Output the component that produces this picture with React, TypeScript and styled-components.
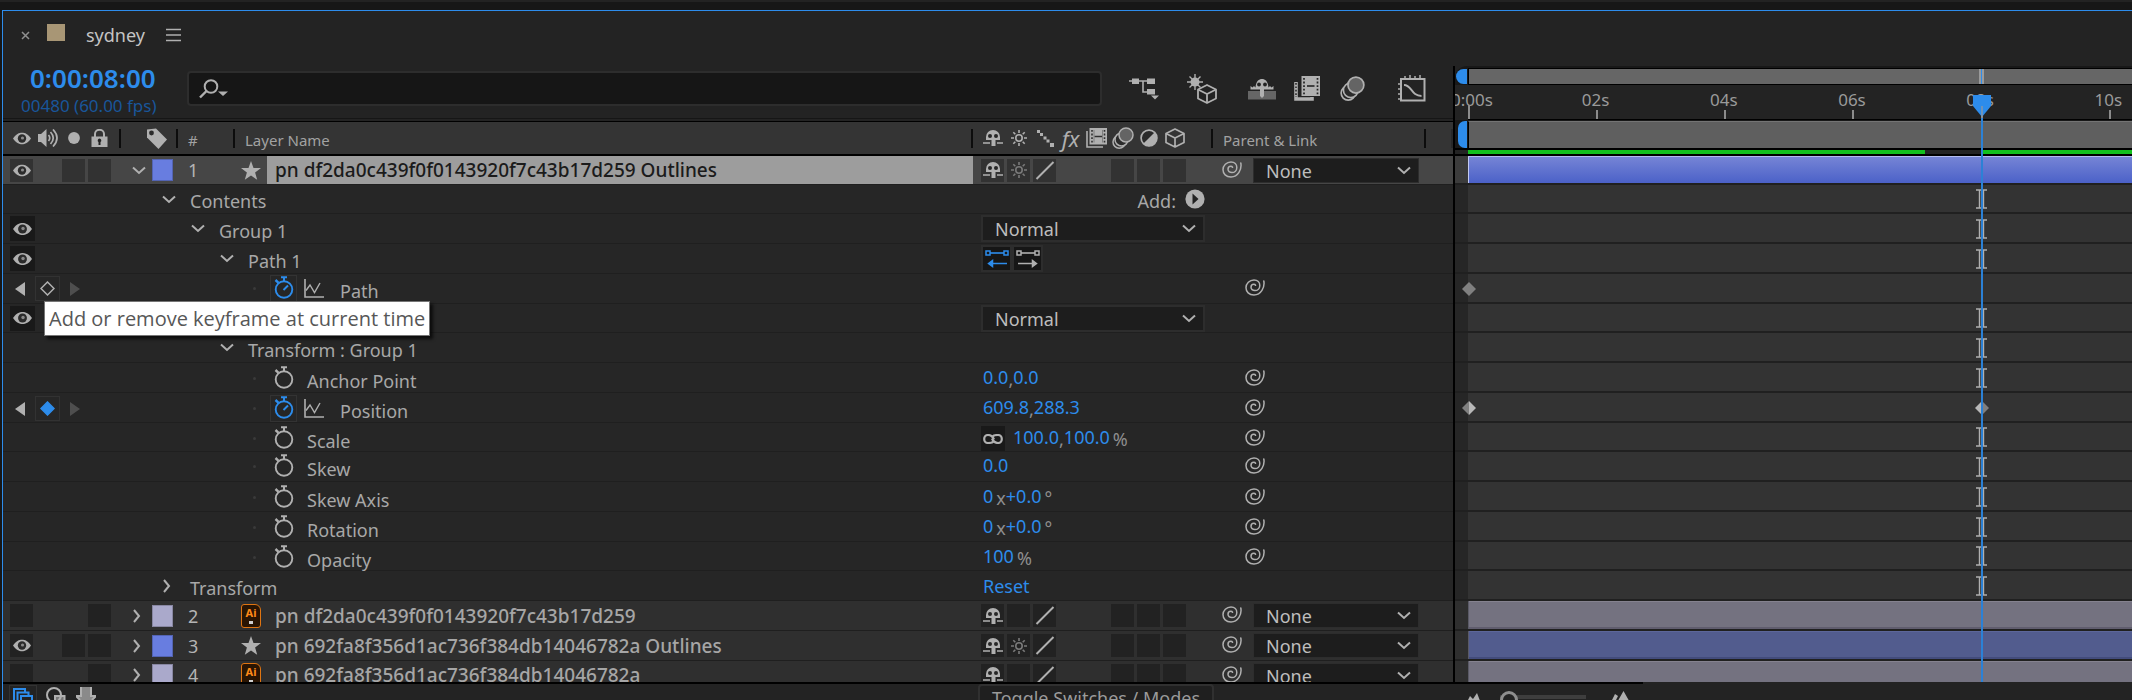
import React from "react";
import styled, { createGlobalStyle, css } from "styled-components";

const c = {
  bg: "#232323",
  row: "#262626",
  layer: "#2f2f2f",
  selected: "#464646",
  line: "#1f1f1f",
  icon: "#b0b0b0",
  text: "#a8a8a8",
  blue: "#2d8ceb",
};

const GlobalStyle = createGlobalStyle`
  * { box-sizing: border-box; }
  body { margin: 0; background: ${c.bg}; }
  button, input, select { font: inherit; color: inherit; margin: 0; }
  svg { display: block; flex: none; }
`;

/* ---------- frame ---------- */

const Shell = styled.div`
  height: 100vh;
  display: flex;
  flex-direction: column;
  overflow: hidden;
  background: #171717;
  color: ${c.text};
  font: 18px/24px "Noto Sans", "Open Sans", sans-serif;
`;

const NeighbourEdge = styled.div`
  flex: none;
  height: 10px;
  border-top: 2px solid #232323;
  background: #171717;
`;

const Panel = styled.section`
  flex: 1;
  min-height: 0;
  margin-left: 2px;
  display: flex;
  flex-direction: column;
  border: solid ${c.blue};
  border-width: 1px 0 0 1px;
  background: ${c.bg};
`;

const PlainButton = styled.button`
  display: flex;
  align-items: center;
  justify-content: center;
  padding: 0;
  border: 0;
  background: none;
  cursor: pointer;
`;

const Tabs = styled.header`
  flex: none;
  height: 55px;
  padding: 11px 18px 18px;
  display: flex;
  align-items: center;
`;

const TabSwatch = styled.span`
  width: 18px;
  height: 17px;
  margin: 0 21px 5px 17px;
  background: #a89675;
`;

const TabTitle = styled.h1`
  margin: 0 21px 0 0;
  color: #c4c4c4;
  font-size: 18px;
  font-weight: 400;
  line-height: 26px;
`;

const panes = css`
  display: grid;
  grid-template-columns: minmax(1100px, 1452px) minmax(300px, 1fr);
`;

const Workspace = styled.div`
  ${panes}
  flex: 1;
  min-height: 0;
  overflow: hidden;
`;

const LayerPane = styled.div`
  border-right: 2px solid #000;
`;

/* ---------- controls above the layer list ---------- */

const Controls = styled.div`
  height: 52px;
  display: flex;
  padding: 0 26px 0 18px;
`;

const TimeBlock = styled.div`
  width: 166px;
  flex: none;
  white-space: nowrap;
`;

const TimeCode = styled(PlainButton)`
  margin-left: 9px;
  color: ${c.blue};
  font-size: 26px;
  font-weight: 600;
  line-height: 24px;
`;

const FrameInfo = styled.div`
  margin-top: 5px;
  color: #19569a;
  font-size: 17px;
  line-height: 22px;
`;

const SearchBox = styled.label`
  flex: 1;
  height: 35px;
  margin: 5px 27px 0 0;
  padding-left: 10px;
  display: flex;
  align-items: center;
  gap: 8px;
  border: 2px solid #2d2d2d;
  border-radius: 4px;
  background: #161616;
`;

const SearchInput = styled.input`
  flex: 1;
  min-width: 0;
  border: 0;
  outline: 0;
  background: none;
`;

const ToolGroups = styled.div`
  display: flex;
  align-items: center;
  gap: 30px;
  height: 45px;
`;

const ToolGroup = styled.div<{ $gap?: number }>`
  display: flex;
  gap: ${(p) => p.$gap ?? 0}px;
`;

const ToolButton = styled(PlainButton)`
  width: 30px;
  height: 30px;
`;

/* ---------- layer list ---------- */

const columns = css`
  display: grid;
  grid-template-columns: 118px 57px 57px minmax(0, 1fr) 240px 213px 27px;
`;

const ColumnHeads = styled.div`
  ${columns}
  height: 38px;
  align-items: center;
  border-top: 1px solid #161616;
  border-bottom: 2px solid #000;
  background: linear-gradient(#232323 0 2px, #000 2px 3px, #343434 3px);
  color: #a2a2a2;
  font-size: 15px;
`;

const Head = styled.div<{ $pad?: number }>`
  height: 19px;
  margin-top: 3px;
  padding-left: ${(p) => p.$pad ?? 0}px;
  display: flex;
  align-items: center;
  border-right: 2px solid #0c0c0c;
  &:last-child { border-right-color: #292929; }
`;

const HeadText = styled.span`
  padding-top: 3px;
`;

const Slots = styled.div<{ $pad?: number }>`
  display: flex;
  align-items: center;
  gap: 3px;
  padding-left: ${(p) => p.$pad ?? 0}px;
`;

const Slot = styled.span`
  width: 23px;
  height: 23px;
  display: flex;
  align-items: center;
  justify-content: center;
`;

const rowHeight = css`
  height: 30px;
  &:nth-child(4n + 2) { height: 29px; }
  &:first-child { height: 28px; border-top: 0; }
`;

const Row = styled.div<{ $kind: "selected" | "layer" | "prop" }>`
  ${columns}
  ${rowHeight}
  align-items: center;
  border-top: 1px solid ${c.line};
  background: ${(p) => (p.$kind === "selected" ? c.selected : p.$kind === "layer" ? c.layer : c.row)};
`;

const SlotButton = styled(PlainButton)<{ $tone?: "selected" | "layer" | "tree" | "none" }>`
  width: ${(p) => (p.$tone === "tree" ? 25 : 23)}px;
  height: ${(p) => (p.$tone === "tree" ? 25 : 23)}px;
  background: ${(p) => ({ selected: "#323232", layer: "#222222", tree: "#191919", none: "none" })[p.$tone ?? "none"]};
`;

const LabelCell = styled.div`
  display: flex;
  align-items: center;
  gap: 7px;
  padding-left: 12px;
`;

const Twirl = styled(PlainButton)<{ $closed?: boolean }>`
  width: 12px;
  height: 20px;
  justify-content: ${(p) => (p.$closed ? "flex-start" : "center")};
`;

const Swatch = styled.span<{ $color: string }>`
  width: 21px;
  height: 22px;
  border: 1px solid #0003;
  background: ${(p) => p.$color};
`;

const NumberCell = styled.div`
  padding-left: 10px;
  color: #b4b4b4;
`;

const LayerName = styled.div`
  display: flex;
  align-items: center;
  gap: 6px;
  height: 100%;
  padding-left: 6px;
`;

const NameField = styled.span<{ $selected?: boolean }>`
  flex: 1;
  height: 100%;
  display: flex;
  align-items: center;
  padding-left: 8px;
  overflow: hidden;
  white-space: nowrap;
  font-size: 19px;
  font-weight: 500;
  color: ${(p) => (p.$selected ? "#1b1b1b" : "#a6a6a6")};
  background: ${(p) => (p.$selected ? "#9d9d9d" : "none")};
`;

const TreeCell = styled.div<{ $depth: number }>`
  grid-column: 2 / 5;
  display: flex;
  align-items: center;
  padding-left: ${(p) => 42 + p.$depth * 29}px;
`;

const GroupName = styled.span`
  padding: 4px 0 0 15px;
`;

const PropCell = styled.div`
  grid-column: 2 / 5;
  display: flex;
  align-items: center;
  padding-left: 132px;
`;

const PropName = styled.span`
  padding: 4px 0 0 10px;
`;

const Dot = styled.i`
  width: 3px;
  height: 3px;
  margin-right: 14px;
  border-radius: 2px;
  background: #3a3a3a;
`;

const WatchButton = styled(PlainButton)<{ $on?: boolean }>`
  width: 27px;
  height: 27px;
  padding-bottom: 2px;
  border: 1px solid ${(p) => (p.$on ? "#333333" : "transparent")};
`;

const GraphButton = styled(PlainButton)`
  margin: 0 6px 0 7px;
`;

const KeyNav = styled.div`
  display: flex;
  align-items: center;
  gap: 10px;
  padding-left: 12px;
`;

const KeyToggle = styled(PlainButton)`
  position: relative;
  width: 25px;
  height: 25px;
  border: 1px solid #323232;
`;

const Tooltip = styled.span`
  position: absolute;
  z-index: 5;
  left: 8px;
  top: 24px;
  height: 35px;
  padding: 0 4px;
  border: 1px solid #767676;
  background: #fff;
  box-shadow: 3px 3px 3px #000a;
  color: #575757;
  font: 20px/33px "Open Sans", "Noto Sans", sans-serif;
  white-space: nowrap;
`;

const ValueCell = styled.div<{ $end?: boolean }>`
  display: flex;
  align-items: center;
  justify-content: ${(p) => (p.$end ? "flex-end" : "flex-start")};
  padding: 0 8px;
`;

const AddLabel = styled.span`
  padding: 4px 9px 0 0;
`;

const Values = styled.div<{ $raised?: boolean }>`
  display: flex;
  align-items: center;
  padding: 0 0 ${(p) => (p.$raised ? 3 : 0)}px 2px;
`;

const Value = styled(PlainButton)`
  color: ${c.blue};
`;

const Unit = styled.span<{ $gap?: boolean }>`
  padding: 4px 0 0 ${(p) => (p.$gap ? 3 : 0)}px;
  color: #8e8e8e;
`;

const ChainButton = styled(PlainButton)`
  width: 24px;
  height: 25px;
  margin-right: 6px;
  background: #191919;
`;

const PathButton = styled(PlainButton)`
  width: 31px;
  height: 27px;
  border: 2px solid #2d2d2d;
  background: #161616;
`;

const ParentCell = styled.div<{ $prop?: boolean }>`
  display: flex;
  align-items: center;
  gap: 11px;
  padding-left: ${(p) => (p.$prop ? 32 : 9)}px;
`;

const WhipButton = styled(PlainButton)`
  padding-bottom: 2px;
`;

const SelectBox = styled.span<{ $parent?: boolean }>`
  position: relative;
  width: ${(p) => (p.$parent ? 166 : 224)}px;
  height: ${(p) => (p.$parent ? 25 : 27)}px;
  border: ${(p) => (p.$parent ? 1 : 2)}px solid #2d2d2d;
  background: #1d1d1d;
  svg {
    position: absolute;
    right: 7px;
    top: 7px;
    pointer-events: none;
  }
`;

const Select = styled.select`
  display: block;
  width: 100%;
  height: 100%;
  padding: 0 28px 0 12px;
  appearance: none;
  border: 0;
  outline: 0;
  background: none;
  color: #bdbdbd;
`;

/* ---------- timeline ---------- */

const Timeline = styled.div`
  position: relative;
  overflow: hidden;
`;

const Navigator = styled.div`
  height: 19px;
  padding-top: 2px;
  display: flex;
  border-radius: 12px 0 0 0;
  background: #181818;
`;

const NavHandle = styled.span`
  width: 11px;
  height: 15px;
  margin: 1px 1px 0 1px;
  border-radius: 10px 0 0 10px;
  background: ${c.blue};
`;

const NavTrack = styled.span`
  flex: 1;
  border: solid #000;
  border-width: 1px 0 1px 1px;
  background: #666666;
`;

const Ruler = styled.div`
  height: 35px;
  margin-left: 13px;
  position: relative;
  border-bottom: 1px solid #000;
`;

const MarkText = styled.span`
  padding-right: 3px;
`;

const Mark = styled.div`
  position: absolute;
  top: 5px;
  width: 60px;
  margin-left: -29px;
  display: flex;
  flex-direction: column;
  align-items: center;
  font-size: 17px;
  line-height: 20px;
  color: #9a9a9a;
  &::after {
    content: "";
    width: 2px;
    height: 9px;
    background: #8c8c8c;
  }
  &:first-child::after {
    margin-top: -5px;
    height: 14px;
  }
  &:first-child ${MarkText} {
    padding: 0 0 0 6px;
  }
`;

const WorkArea = styled.div`
  height: 28px;
  display: flex;
  padding-top: 1px;
  background: #181818;
`;

const WorkHandle = styled.span`
  width: 9px;
  margin: 0 1px 0 3px;
  border-radius: 7px 0 0 7px;
  background: ${c.blue};
`;

const WorkTrack = styled.span`
  flex: 1;
  border-left: 1px solid #000;
  border-top: 1px solid #747474;
  background: #5f5f5f;
`;

const CacheBar = styled.div`
  height: 8px;
  padding-left: 13px;
  display: flex;
  border-top: 2px solid #000;
  border-bottom: 2px solid #000;
  background: #232323;
`;

const Cached = styled.span<{ $share: number }>`
  flex: ${(p) => p.$share} 0 0;
  background: #13c01e;
`;

const Uncached = styled.span<{ $share: number }>`
  flex: ${(p) => p.$share} 0 0;
`;

const Track = styled.div<{ $kind: "selected" | "layer" | "prop" }>`
  ${rowHeight}
  position: relative;
  display: flex;
  padding-left: 13px;
  border-top: 1px solid ${c.line};
  background: ${(p) =>
    p.$kind === "prop"
      ? `linear-gradient(90deg, ${c.row} 13px, #333333 13px)`
      : p.$kind === "selected"
        ? "#3c3c3c"
        : c.layer};
  &:not(:first-child)::before {
    content: "";
    position: absolute;
    left: 0;
    right: 0;
    top: -2px;
    height: 2px;
    background: #202020;
  }
`;

const bars = {
  selected: "linear-gradient(#7584d5, #4a60c8)",
  blue: "linear-gradient(#5c669a 0 1px, #525c8e 1px calc(100% - 3px), #434c7c calc(100% - 3px))",
  lavender: "linear-gradient(#85828f 0 1px, #747280 1px calc(100% - 3px), #605d6e calc(100% - 3px))",
};

const Bar = styled.div<{ $bar: keyof typeof bars }>`
  flex: 1;
  border-left: 1px solid ${(p) => (p.$bar === "selected" ? "#c3caf2" : "#5a5a66")};
  border-top: ${(p) => (p.$bar === "selected" ? "1px solid #b4bdf0" : "0")};
  background: ${(p) => bars[p.$bar]};
`;

const Lane = styled.div`
  position: relative;
  flex: 1;
`;

const Pin = styled.span`
  position: absolute;
  top: 0;
  bottom: 0;
  width: 16px;
  margin-left: -7px;
  display: flex;
  align-items: center;
  justify-content: center;
`;

const Overlay = styled.div`
  position: absolute;
  inset: 0 0 0 13px;
  pointer-events: none;
`;

const Playhead = styled.div`
  position: absolute;
  top: 3px;
  bottom: 0;
  width: 18px;
  margin-left: -8px;
  display: flex;
  flex-direction: column;
  align-items: center;
`;

const NavMarker = styled.span`
  width: 5px;
  height: 15px;
  margin-bottom: 11px;
  border: solid #9a9a9a;
  border-width: 0 2px;
  background: ${c.blue};
`;

const HeadLine = styled.span`
  flex: 1;
  width: 2px;
  margin-top: 1px;
  background: #2b81d6;
`;

/* ---------- footer ---------- */

const Footer = styled.footer`
  ${panes}
  flex: none;
  height: 18px;
  overflow: hidden;
  background: #232323;
`;

const FooterLeft = styled.div`
  ${columns}
  align-items: start;
  border-top: 2px solid #000;
`;

const FooterTools = styled.div`
  grid-column: 1 / 5;
  display: flex;
  gap: 8px;
  padding: 1px 0 0 6px;
`;

const FooterButton = styled(PlainButton)<{ $on?: boolean }>`
  width: ${(p) => (p.$on ? 28 : 22)}px;
  height: 26px;
  border: ${(p) => (p.$on ? "1px solid #333333" : "0")};
`;

const ToggleButton = styled(PlainButton)`
  width: 236px;
  height: 28px;
  margin: 0 0 0 3px;
  border: 2px solid #303030;
  border-radius: 4px;
  background: #1f1f1f;
  color: #9a9a9a;
`;

const FooterRight = styled.div`
  display: flex;
  align-items: flex-start;
  padding: 8px 0 0 10px;
  background: linear-gradient(90deg, #000 188px, #232323 188px) top / 100% 2px no-repeat;
`;

const ZoomSlider = styled.input`
  width: 86px;
  height: 20px;
  margin: 0 23px 0 18px;
  appearance: none;
  background: linear-gradient(#0000 5px, #3e3e3e 5px 9px, #0000 9px);
  &::-webkit-slider-thumb {
    appearance: none;
    width: 18px;
    height: 18px;
    border: 3px solid #8e8e8e;
    border-radius: 50%;
    background: #232323;
  }
`;

/* ---------- icons ---------- */

const Eye = ({ w = 18 }: { w?: number }) => (
  <svg width={w} height={w - 5} viewBox="0 0 18 13">
    <path d="M0 6.500C3 2 6 .8 9 .8s6 1.200 9 5.700C15 11 12 12.200 9 12.200S3 11 0 6.500Z" fill={c.icon} />
    <circle cx="9" cy="6.500" r="4.200" fill="#2b2b2b" />
    <circle cx="9.500" cy="6" r="1.600" fill="#8a8a8a" />
  </svg>
);

const Speaker = () => (
  <svg width="20" height="18" viewBox="0 0 20 18">
    <path d="M0 5h3L8.500 0v18L3 13H0Z" fill={c.icon} />
    <path d="M10.500 6q2.500 3 0 6M12.500 3q5.500 6 0 12M15 .5q8 8.500 0 17" stroke={c.icon} strokeWidth="1.700" fill="none" />
  </svg>
);

const Solo = () => (
  <svg width="12" height="12"><circle cx="6" cy="6" r="5.900" fill={c.icon} /></svg>
);

const Lock = () => (
  <svg width="17" height="18" viewBox="0 0 17 18">
    <path d="M4 8V5a4.500 4.200 0 0 1 9 0v3" stroke={c.icon} strokeWidth="2" fill="none" />
    <path d="M.5 7.500h16V18H.5Z" fill={c.icon} />
    <path d="M8.500 9.500a2 2 0 0 1 1 3.600V16h-2v-2.900a2 2 0 0 1 1-3.600Z" fill="#222" />
  </svg>
);

const Tag = () => (
  <svg width="22" height="21" viewBox="0 0 22 21">
    <path d="M1 1.500 10 .5 21 11.500 12.500 21 1 9.500Z" fill={c.icon} />
    <circle cx="5.500" cy="5" r="2.400" fill="#2b2b2b" />
  </svg>
);

const Shy = () => (
  <svg width="20" height="16" viewBox="0 0 20 16">
    <path d="M3 10V7a7 7 0 0 1 14 0v3H12.500v6h-4v-6Z" fill={c.icon} />
    <circle cx="7" cy="6" r="2" fill="#262626" />
    <circle cx="13" cy="6" r="2" fill="#262626" />
    <path d="M0 13h7M14 13h6" stroke={c.icon} strokeWidth="1.500" />
  </svg>
);

const Sun = ({ color = c.icon }: { color?: string }) => (
  <svg width="16" height="16" viewBox="0 0 16 16" stroke={color} strokeWidth="1.600" fill="none">
    <circle cx="8" cy="8" r="3.200" />
    <path d="M8 0v3M8 13v3M0 8h3M13 8h3M2.300 2.300l2 2M11.700 11.700l2 2M2.300 13.700l2-2M11.700 4.300l2-2" />
  </svg>
);

const Stairs = () => (
  <svg width="18" height="17" viewBox="0 0 18 17" fill={c.icon}>
    <path d="M1 0h3v3H1ZM4 3h3v3H4ZM7.500 6.500h3v3h-3ZM10.500 9.500h3v3h-3ZM14 13h4v4h-4Z" />
  </svg>
);

const Slash = () => (
  <svg width="20" height="19" viewBox="0 0 20 19"><path d="M1.500 18 18.500 1" stroke={c.icon} strokeWidth="2" /></svg>
);

const Fx = styled.i`
  color: ${c.icon};
  font: italic 22px/22px "Noto Sans", sans-serif;
`;

const Film = ({ s = 21 }: { s?: number }) => (
  <svg width={s} height={s - 1} viewBox="0 0 21 20">
    <path d="M1 3v16h16" stroke={c.icon} strokeWidth="1.600" fill="none" />
    <path d="M3.500 0H21v16.500H3.500Z" fill={c.icon} />
    <path d="M6 2v13M18.500 2v13" stroke="#303030" strokeWidth="1.600" strokeDasharray="1.800 1.800" />
    <path d="M8.500 8.500h7.500" stroke="#303030" strokeWidth="1.500" />
    <path d="M8 2v12.500M16.500 2v12.500" stroke="#6a6a6a" strokeWidth=".7" />
  </svg>
);

const Blur = ({ s = 22 }: { s?: number }) => (
  <svg width={s} height={s} viewBox="0 0 22 22" stroke={c.icon} strokeWidth="1.500">
    <circle cx="7.200" cy="15" r="6.200" fill="none" />
    <circle cx="9.500" cy="12.500" r="6.500" fill="#2b2b2b" />
    <circle cx="14" cy="8" r="7" fill="#646464" />
  </svg>
);

const Adjust = () => (
  <svg width="18" height="18" viewBox="0 0 18 18">
    <circle cx="9" cy="9" r="7.900" fill="#2b2b2b" stroke={c.icon} strokeWidth="1.700" />
    <path d="M14.800 3.200A8.200 8.200 0 0 1 3.200 14.800Z" fill={c.icon} />
  </svg>
);

const Cube = ({ s = 20 }: { s?: number }) => (
  <svg width={s} height={s} viewBox="0 0 20 20" stroke={c.icon} strokeWidth="1.700" fill="none" strokeLinejoin="round">
    <path d="M10 1 19 5.500v9L10 19 1 14.500v-9ZM1 5.500 10 10l9-4.500M10 10v9" />
  </svg>
);

const Whip = () => (
  <svg width="20" height="17" viewBox="0 0 20 17" stroke={c.icon} strokeWidth="1.500" fill="none" strokeLinecap="round">
    <path d="M18.800 2C20 8.500 16 16 9 16 4 16 1 12.800 1 8.800 1 4.500 4.500 1 9 1c3.700 0 5.800 2.400 5.800 5.400 0 3.100-2.200 5.200-4.900 5.200-2.300 0-3.900-1.400-3.900-3.300 0-1.800 1.300-3 2.800-3 .8 0 1.500.4 1.800 1" />
  </svg>
);

const Down = () => (
  <svg width="14" height="9" viewBox="0 0 14 9"><path d="m1 1.500 6 5.500 6-5.500" stroke={c.icon} strokeWidth="2" fill="none" /></svg>
);

const Right = () => (
  <svg width="8" height="14" viewBox="0 0 8 14"><path d="m1 1 5 6-5 6" stroke={c.icon} strokeWidth="2" fill="none" /></svg>
);

const Star = () => (
  <svg width="20" height="19" viewBox="0 0 20 19">
    <path d="m10 0 2.500 6.900 7.500.2-5.900 4.500 2.100 7.200-6.200-4.200-6.200 4.200 2.100-7.200L0 7.100l7.500-.2Z" fill={c.icon} />
  </svg>
);

const AiFile = styled.span`
  width: 20px;
  height: 24px;
  border: 1px solid #e07512;
  border-radius: 3px 6px 3px 3px;
  background: #2a1503;
  color: #ff8a18;
  font: 700 11px/15px "Noto Sans", sans-serif;
  text-align: center;
  &::after {
    content: "";
    display: block;
    width: 4px;
    height: 3px;
    margin: 1px auto 0;
    background: #d0d0d0;
  }
`;

const Stopwatch = ({ on }: { on?: boolean }) => (
  <svg width="20" height="23" viewBox="0 0 20 23" stroke={on ? c.blue : c.icon} fill="none">
    <circle cx="10" cy="13.500" r="8.300" strokeWidth="1.900" />
    <path d="M10 5V2M7 1.300h6" strokeWidth="2" />
    <path d="m1.500 4 3 2.800" strokeWidth="2.400" />
    {on && <path d="M9.500 14 14 9.500" strokeWidth="2" />}
  </svg>
);

const Graph = () => (
  <svg width="20" height="19" viewBox="0 0 20 19" stroke={c.icon} fill="none">
    <path d="M1 0v18h19" strokeWidth="1.600" />
    <path d="m2 11.500 4-5.500 4.500 7.500L16 4" strokeWidth="1.400" />
  </svg>
);

const Arrow = ({ left }: { left?: boolean }) => (
  <svg width="10" height="14" viewBox="0 0 10 14">
    <path d={left ? "M10 0v14L0 7Z" : "M0 0v14l10-7Z"} fill={left ? c.icon : "#4e4e4e"} />
  </svg>
);

const Key = ({ on }: { on?: boolean }) => (
  <svg width="15" height="15" viewBox="0 0 15 15">
    <path d="M7.500 1 14 7.500 7.500 14 1 7.500Z" fill={on ? c.blue : "#262626"} stroke={on ? c.blue : c.icon} strokeWidth="1.500" />
  </svg>
);

const KeyMark = ({ l, r }: { l: string; r: string }) => (
  <svg width="14" height="14" viewBox="0 0 14 14">
    <path d="M7 0v14L0 7Z" fill={l} />
    <path d="M7 0v14l7-7Z" fill={r} />
  </svg>
);

const IBeam = () => (
  <svg width="11" height="20" viewBox="0 0 11 20" stroke="#b0b0b0" fill="none">
    <path d="M0 1h11M0 19h11" strokeWidth="1.500" />
    <path d="M3.500 1v18M7.500 1v18" strokeWidth="1.400" />
  </svg>
);

const PathDir = ({ back }: { back?: boolean }) => (
  <svg width="24" height="18" viewBox="0 0 24 18" stroke={back ? c.blue : c.icon} fill={back ? c.blue : c.icon}>
    <path d="M4 3h16" strokeWidth="1.600" />
    <path d="M1 1h4v4H1ZM19 1h4v4h-4Z" fill="#161616" strokeWidth="1.500" />
    {back ? (
      <path d="M8 13.500h14M3.500 13.500 7.500 10.500v6Z" strokeWidth="1.500" />
    ) : (
      <path d="M2 13.500h14M20.500 13.500 16.500 10.500v6Z" strokeWidth="1.500" />
    )}
  </svg>
);

const Chain = () => (
  <svg width="20" height="10" viewBox="0 0 20 10" stroke={c.icon} strokeWidth="2.200" fill="none">
    <path d="M10.500 7.500C9 9 7 9 5 9 2.500 9 1.200 7 1.200 5S2.500 1 5 1c3 0 4.500 1 6 4.500" />
    <path d="M9.500 2.500C11 1 13 1 15 1c2.500 0 3.800 2 3.800 4S17.500 9 15 9c-3 0-4.500-1-6-4.500" />
  </svg>
);

const Play = () => (
  <svg width="20" height="20" viewBox="0 0 20 20">
    <circle cx="10" cy="10" r="9.600" fill={c.icon} />
    <path d="m7.500 4.500 6 5.500-6 5.500Z" fill="#222" />
  </svg>
);

const Magnifier = () => (
  <svg width="29" height="20" viewBox="0 0 29 20">
    <circle cx="12" cy="7.500" r="6.300" stroke={c.icon} strokeWidth="2" fill="none" />
    <path d="M7.500 12 1 18.500" stroke={c.icon} strokeWidth="2.400" />
    <path d="M19 12.500h10l-5 4.500Z" fill={c.icon} />
  </svg>
);

const Flowchart = () => (
  <svg width="30" height="24" viewBox="0 0 30 24" fill={c.icon}>
    <path d="M0 4h26M14 4v11h5" stroke={c.icon} strokeWidth="1.600" fill="none" />
    <path d="M3 1.500h7v5.500H3ZM18 1.500h8v5.500h-8ZM18 12h8v5.500h-8ZM22 18.500h8l-4 4Z" />
  </svg>
);

const Draft3D = () => (
  <svg width="30" height="30" viewBox="0 0 30 30" stroke={c.icon} fill="none">
    <circle cx="8" cy="8" r="4.500" fill={c.icon} stroke="none" />
    <path d="M8 0v16M0 8h16M2.500 2.500l11 11M2.500 13.500l11-11" strokeWidth="1.400" />
    <path d="m20 11 9 4.500v9L20 29l-9-4.500v-9Z" fill={c.bg} strokeWidth="1.800" strokeLinejoin="round" />
    <path d="M11 15.500l9 4.500 9-4.500M20 20v9" strokeWidth="1.800" />
  </svg>
);

const HideShy = () => (
  <svg width="28" height="22" viewBox="0 0 28 22">
    <path d="M0 13h28v8.500H0Z" fill="#666" />
    <path d="M2.500 11.500V8l2 1.500L6 8l1.500 1.500C8 3 11 1 14 1s6 2 6.500 8.500L22 8l1.500 1.500 2-1.500v3.500Z" fill={c.icon} />
    <path d="M12 9h4v9l-2 2-2-2Z" fill={c.icon} />
    <circle cx="11" cy="6.500" r="1.900" fill={c.bg} />
    <circle cx="17" cy="6.500" r="1.900" fill={c.bg} />
  </svg>
);

const Frames = () => (
  <svg width="26" height="25" viewBox="0 0 26 25">
    <path d="M2 6v17h16v-2" stroke={c.icon} strokeWidth="3.600" fill="none" />
    <path d="M2 7v14" stroke={c.bg} strokeWidth="1.500" strokeDasharray="1.700 1.700" />
    <path d="M7.500 0H26v20H7.500Z" fill={c.icon} />
    <path d="M10 2v17M23.500 2v17" stroke={c.bg} strokeWidth="1.700" strokeDasharray="1.800 1.800" />
    <path d="M13 10h7.500" stroke={c.bg} strokeWidth="1.600" />
  </svg>
);

const GraphEditor = () => (
  <svg width="28" height="27" viewBox="0 0 28 27" stroke={c.icon} fill="none">
    <path d="M3 4h23.500v21.500H3Z" strokeWidth="2" />
    <path d="M6 10c8 0 7 11 17.500 11" strokeWidth="1.900" />
    <path d="M7 4V1M12 4V0M17 4V1M22 4V0M3 9H0M3 14H0M3 19H0M3 24H0" strokeWidth="1.500" />
  </svg>
);

const Close = () => (
  <svg width="9" height="9" viewBox="0 0 9 9"><path d="m1 1 7 7M8 1 1 8" stroke="#909090" strokeWidth="1.500" /></svg>
);

const Menu = () => (
  <svg width="15" height="14" viewBox="0 0 15 14"><path d="M0 1.500h15M0 7h15M0 12.500h15" stroke="#b0b0b0" strokeWidth="1.700" /></svg>
);

const HeadPin = () => (
  <svg width="18" height="22" viewBox="0 0 18 22">
    <path d="M0 0h18v11L9 22 0 11Z" fill={c.blue} />
    <path d="M9 11v11" stroke="#9a9a9a" strokeWidth="1.200" />
  </svg>
);

/* ---------- data ---------- */

type PropKind = "position" | "point" | "scale" | "number" | "angle" | "percent" | "path";

type Item =
  | { t: "layer"; n: number; name: string; star?: boolean; selected?: boolean; eye?: boolean }
  | { t: "group"; name?: string; depth: number; eye?: boolean; extra?: "add" | "mode" | "dir" | "reset"; closed?: boolean }
  | { t: "prop"; name: string; kind: PropKind; values?: string[]; keyed?: boolean; keys?: number[] };

const items: Item[] = [
  { t: "layer", n: 1, name: "pn df2da0c439f0f0143920f7c43b17d259 Outlines", star: true, selected: true, eye: true },
  { t: "group", name: "Contents", depth: 0, extra: "add" },
  { t: "group", name: "Group 1", depth: 1, eye: true, extra: "mode" },
  { t: "group", name: "Path 1", depth: 2, eye: true, extra: "dir" },
  { t: "prop", name: "Path", kind: "path", keyed: true, keys: [0] },
  { t: "group", depth: 2, eye: true, extra: "mode", closed: true },
  { t: "group", name: "Transform : Group 1", depth: 2 },
  { t: "prop", name: "Anchor Point", kind: "point", values: ["0.0", "0.0"] },
  { t: "prop", name: "Position", kind: "position", values: ["609.8", "288.3"], keyed: true, keys: [0, 8] },
  { t: "prop", name: "Scale", kind: "scale", values: ["100.0", "100.0"] },
  { t: "prop", name: "Skew", kind: "number", values: ["0.0"] },
  { t: "prop", name: "Skew Axis", kind: "angle", values: ["0", "+0.0"] },
  { t: "prop", name: "Rotation", kind: "angle", values: ["0", "+0.0"] },
  { t: "prop", name: "Opacity", kind: "percent", values: ["100"] },
  { t: "group", name: "Transform", depth: 0, extra: "reset", closed: true },
  { t: "layer", n: 2, name: "pn df2da0c439f0f0143920f7c43b17d259" },
  { t: "layer", n: 3, name: "pn 692fa8f356d1ac736f384db14046782a Outlines", star: true, eye: true },
  { t: "layer", n: 4, name: "pn 692fa8f356d1ac736f384db14046782a" },
];

const marks: [number, string][] = [[0, "0:00s"], [2, "02s"], [4, "04s"], [6, "06s"], [8, "08s"], [10, "10s"]];

/* Horizontal share of the visible track that one second takes. */
const at = (seconds: number) => ({ left: `${seconds * 9.65}%` });

/* ---------- rows ---------- */

const Dropdown = ({ label, value, parent }: { label: string; value: string; parent?: boolean }) => (
  <SelectBox $parent={parent}>
    <Select aria-label={label} defaultValue={value}>
      <option>{value}</option>
    </Select>
    <Down />
  </SelectBox>
);

const LayerRow = ({ item }: { item: Extract<Item, { t: "layer" }> }) => {
  const tone = item.selected ? "selected" : "layer";
  return (
    <Row $kind={tone}>
      <Slots $pad={7}>
        <SlotButton $tone={tone} aria-label="Video">{item.eye && <Eye />}</SlotButton>
        <SlotButton aria-label="Audio" />
        <SlotButton $tone={item.star ? tone : "none"} aria-label="Solo" />
        <SlotButton $tone={tone} aria-label="Lock" />
      </Slots>
      <LabelCell>
        <Twirl $closed={!item.selected} aria-label={item.selected ? "Collapse" : "Expand"}>
          {item.selected ? <Down /> : <Right />}
        </Twirl>
        <Swatch $color={item.star ? "#687de0" : "#aaa9cb"} />
      </LabelCell>
      <NumberCell>{item.n}</NumberCell>
      <LayerName>
        {item.star ? <Star /> : <AiFile>Ai</AiFile>}
        <NameField $selected={item.selected}>{item.name}</NameField>
      </LayerName>
      <Slots $pad={8}>
        <SlotButton $tone={tone} aria-label="Shy"><Shy /></SlotButton>
        <SlotButton $tone={tone} aria-label="Collapse transformations">{item.star && <Sun color="#7a7a7a" />}</SlotButton>
        <SlotButton $tone={tone} aria-label="Quality"><Slash /></SlotButton>
        <Slot />
        <Slot />
        <SlotButton $tone={tone} aria-label="Motion blur" />
        <SlotButton $tone={tone} aria-label="Adjustment layer" />
        <SlotButton $tone={tone} aria-label="3D layer" />
      </Slots>
      <ParentCell>
        <WhipButton aria-label="Parent pick whip"><Whip /></WhipButton>
        <Dropdown parent label={`Parent of layer ${item.n}`} value="None" />
      </ParentCell>
    </Row>
  );
};

const GroupRow = ({ item }: { item: Extract<Item, { t: "group" }> }) => (
  <Row $kind="prop">
    <Slots $pad={7}>{item.eye && <SlotButton $tone="tree" aria-label="Visible"><Eye w={19} /></SlotButton>}</Slots>
    <TreeCell $depth={item.depth}>
      <Twirl $closed={item.closed} aria-label={item.closed ? "Expand" : "Collapse"}>
        {item.closed ? <Right /> : <Down />}
      </Twirl>
      {item.name && <GroupName>{item.name}</GroupName>}
    </TreeCell>
    <ValueCell $end={item.extra === "add"}>
      {item.extra === "add" && (
        <>
          <AddLabel>Add:</AddLabel>
          <PlainButton aria-label="Add"><Play /></PlainButton>
        </>
      )}
      {item.extra === "mode" && <Dropdown label="Blend mode" value="Normal" />}
      {item.extra === "dir" && (
        <>
          <PathButton aria-label="Forward direction"><PathDir back /></PathButton>
          <PathButton aria-label="Reverse direction"><PathDir /></PathButton>
        </>
      )}
      {item.extra === "reset" && <Values><Value>Reset</Value></Values>}
    </ValueCell>
  </Row>
);

const PropValues = ({ kind, values }: { kind: PropKind; values: string[] }) => (
  <Values $raised>
    <Value>{values[0]}</Value>
    {kind === "angle" && <Unit $gap>x</Unit>}
    {kind !== "angle" && values.length > 1 && <Unit>,</Unit>}
    {values.length > 1 && <Value>{values[1]}</Value>}
    {kind === "angle" && <Unit $gap>°</Unit>}
    {(kind === "scale" || kind === "percent") && <Unit $gap>%</Unit>}
  </Values>
);

const PropRow = ({ item }: { item: Extract<Item, { t: "prop" }> }) => (
  <Row $kind="prop">
    {item.keyed ? (
      <KeyNav>
        <PlainButton aria-label="Previous keyframe"><Arrow left /></PlainButton>
        <KeyToggle aria-label="Add or remove keyframe">
          <Key on={item.kind === "position"} />
          {item.kind === "path" && <Tooltip role="tooltip">Add or remove keyframe at current time</Tooltip>}
        </KeyToggle>
        <PlainButton aria-label="Next keyframe"><Arrow /></PlainButton>
      </KeyNav>
    ) : (
      <span />
    )}
    <PropCell>
      <Dot />
      <WatchButton $on={item.keyed} aria-label="Animate"><Stopwatch on={item.keyed} /></WatchButton>
      {item.keyed && <GraphButton aria-label="Include in graph editor"><Graph /></GraphButton>}
      <PropName>{item.name}</PropName>
    </PropCell>
    <ValueCell>
      {item.kind === "scale" && <ChainButton aria-label="Constrain proportions"><Chain /></ChainButton>}
      {item.values && <PropValues kind={item.kind} values={item.values} />}
    </ValueCell>
    <ParentCell $prop>
      <WhipButton aria-label="Property pick whip"><Whip /></WhipButton>
    </ParentCell>
  </Row>
);

const TrackRow = ({ item }: { item: Item }) => {
  if (item.t === "layer") {
    const bar = item.selected ? "selected" : item.star ? "blue" : "lavender";
    return <Track $kind={item.selected ? "selected" : "layer"}><Bar $bar={bar} /></Track>;
  }
  const keys = item.t === "prop" ? item.keys : undefined;
  const dim = item.t === "prop" && item.kind === "path";
  return (
    <Track $kind="prop">
      <Lane>
        {keys?.map((k) => (
          <Pin key={k} style={at(k)}>
            <KeyMark l={dim || k === 0 ? "#808080" : "#b8b8b8"} r={dim || k === 8 ? "#808080" : "#b8b8b8"} />
          </Pin>
        ))}
        {!keys && <Pin style={at(8)}><IBeam /></Pin>}
      </Lane>
    </Track>
  );
};

export default function App() {
  return (
    <Shell>
      <GlobalStyle />
      <NeighbourEdge />
      <Panel>
        <Tabs>
          <PlainButton aria-label="Close tab"><Close /></PlainButton>
          <TabSwatch />
          <TabTitle>sydney</TabTitle>
          <PlainButton aria-label="Panel menu"><Menu /></PlainButton>
        </Tabs>
        <Workspace>
          <LayerPane>
            <Controls>
              <TimeBlock>
                <TimeCode>0:00:08:00</TimeCode>
                <FrameInfo>00480 (60.00 fps)</FrameInfo>
              </TimeBlock>
              <SearchBox>
                <Magnifier />
                <SearchInput type="text" aria-label="Search layers" />
              </SearchBox>
              <ToolGroups>
                <ToolGroup $gap={28}>
                  <ToolButton aria-label="Composition mini-flowchart"><Flowchart /></ToolButton>
                  <ToolButton aria-label="Draft 3D"><Draft3D /></ToolButton>
                </ToolGroup>
                <ToolGroup $gap={15}>
                  <ToolButton aria-label="Hide shy layers"><HideShy /></ToolButton>
                  <ToolButton aria-label="Frame blending"><Frames /></ToolButton>
                  <ToolButton aria-label="Motion blur"><Blur s={25} /></ToolButton>
                </ToolGroup>
                <ToolButton aria-label="Graph editor"><GraphEditor /></ToolButton>
              </ToolGroups>
            </Controls>
            <ColumnHeads>
              <Head $pad={7}>
                <Slots>
                  <Slot><Eye /></Slot>
                  <Slot><Speaker /></Slot>
                  <Slot><Solo /></Slot>
                  <Slot><Lock /></Slot>
                </Slots>
              </Head>
              <Head $pad={25}><Tag /></Head>
              <Head $pad={10}><HeadText>#</HeadText></Head>
              <Head $pad={10}><HeadText>Layer Name</HeadText></Head>
              <Head $pad={8}>
                <Slots>
                  <Slot><Shy /></Slot>
                  <Slot><Sun /></Slot>
                  <Slot><Stairs /></Slot>
                  <Slot><Fx>fx</Fx></Slot>
                  <Slot><Film /></Slot>
                  <Slot><Blur /></Slot>
                  <Slot><Adjust /></Slot>
                  <Slot><Cube /></Slot>
                </Slots>
              </Head>
              <Head $pad={10}><HeadText>Parent &amp; Link</HeadText></Head>
              <Head />
            </ColumnHeads>
            <div>
              {items.map((item, i) =>
                item.t === "layer" ? <LayerRow key={i} item={item} />
                  : item.t === "group" ? <GroupRow key={i} item={item} />
                    : <PropRow key={i} item={item} />
              )}
            </div>
          </LayerPane>
          <Timeline>
            <Navigator><NavHandle /><NavTrack /></Navigator>
            <Ruler>
              {marks.map(([s, label]) => (
                <Mark key={s} style={at(s)}><MarkText>{label}</MarkText></Mark>
              ))}
            </Ruler>
            <WorkArea><WorkHandle /><WorkTrack /></WorkArea>
            <CacheBar><Cached $share={457} /><Uncached $share={56} /><Cached $share={151} /></CacheBar>
            <div>{items.map((item, i) => <TrackRow key={i} item={item} />)}</div>
            <Overlay>
              <Playhead style={at(8)}>
                <NavMarker />
                <HeadPin />
                <HeadLine />
              </Playhead>
            </Overlay>
          </Timeline>
        </Workspace>
        <Footer>
          <FooterLeft>
            <FooterTools>
              <FooterButton $on aria-label="Layer switches pane">
                <svg width="20" height="20" viewBox="0 0 20 20" stroke={c.blue} strokeWidth="2" fill="none">
                  <path d="M1 13V1h11v3M4.500 16V4.500h11V8M8 19V8h11v11Z" />
                </svg>
              </FooterButton>
              <FooterButton aria-label="Transfer controls pane">
                <svg width="20" height="22" viewBox="0 0 20 22" stroke={c.icon} strokeWidth="2" fill="none">
                  <path d="M9 9h9.500v11H9Z" fill="#777" />
                  <circle cx="8" cy="8" r="7" />
                </svg>
              </FooterButton>
              <FooterButton aria-label="In and out panes">
                <svg width="20" height="22" viewBox="0 0 20 22">
                  <path d="M5 0h10v9h5L10 20 0 9h5Z" fill="#8a8a8a" />
                  <path d="M5 0v9H0l4 4M15 0v9h5l-4 4" stroke={c.icon} strokeWidth="2" fill="none" />
                </svg>
              </FooterButton>
            </FooterTools>
            <ToggleButton>Toggle Switches / Modes</ToggleButton>
          </FooterLeft>
          <FooterRight>
            <svg width="17" height="16" viewBox="0 0 17 16"><path d="M0 16 5 6l3 3 4-6 5 13Z" fill={c.icon} /></svg>
            <ZoomSlider type="range" min={0} max={100} defaultValue={0} aria-label="Time zoom" />
            <svg width="23" height="18" viewBox="0 0 23 18"><path d="m0 16 6-12 3 2-5 10ZM6 16 14.500 1 23 16Z" fill={c.icon} /></svg>
          </FooterRight>
        </Footer>
      </Panel>
    </Shell>
  );
}
